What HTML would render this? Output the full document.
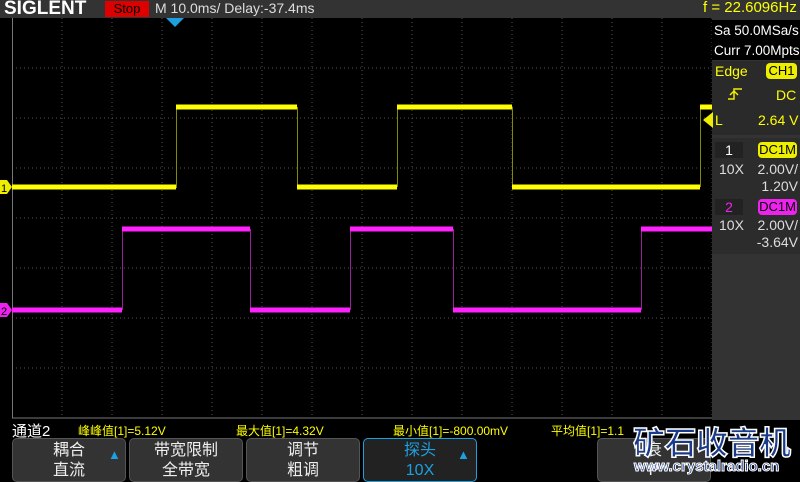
<!DOCTYPE html><html><head><meta charset="utf-8"><style>
body{margin:0;width:800px;height:480px;background:#000;overflow:hidden;position:relative;font-family:"Liberation Sans","Noto Sans CJK SC",sans-serif}
.a{position:absolute;white-space:nowrap}
.btn{position:absolute;top:438px;height:44px;background:#333;border:1px solid #555;border-radius:5px;color:#eee;font-size:16px;text-align:center;line-height:20px;box-sizing:border-box;padding-top:2px}
.y{color:#ff0}
</style></head><body>
<div class="a" style="left:0;top:0;width:800px;height:18px;background:#333"></div>
<div class="a" style="left:4px;top:-2px;color:#fff;font-weight:bold;font-size:19px;letter-spacing:0">SIGLENT</div>
<div class="a" style="left:105px;top:1px;width:44px;height:16px;background:#d00;color:#000;font-size:13px;text-align:center;line-height:16px">Stop</div>
<div class="a" style="left:155px;top:0px;color:#ddd;font-size:14px">M 10.0ms/ Delay:-37.4ms</div>
<div class="a" style="left:703px;top:-1px;color:#ff0;font-size:15px">f = 22.6096Hz</div>
<svg class="a" style="left:0;top:18px" width="712" height="402">
<g stroke="#555" stroke-dasharray="1,3" stroke-width="1">
<path d="M62 0V400M112 0V400M162 0V400M212 0V400M262 0V400M312 0V400M362 0V400M412 0V400M462 0V400M512 0V400M562 0V400M612 0V400M662 0V400M712 0V400"/>
<path d="M12 50H712M12 100H712M12 150H712M12 200H712M12 250H712M12 300H712M12 350H712"/>
</g>
<path d="M12.5 0V400H712" stroke="#777" fill="none"/>
<path d="M166 0L175 9L184 0Z" fill="#1ca0e0"/>
<g stroke-width="1"><path stroke="#880" d="M176.5 89V170M297.5 89V169M397.5 89V169M512.5 89V169M700.5 89V169"/>
<path stroke="#929" d="M122.5 211V292M250.5 211V292M350.5 211V292M453.5 211V292M641.5 211V292"/></g>
<g fill="none" stroke-width="5">
<path stroke="#ff0" d="M12 169H176M297 169H397M512 169H700M176 89H297M397 89H512M700 89H712"/>
<path stroke="#f2f" d="M12 292H122M250 292H350M453 292H641M122 211H250M350 211H453M641 211H712"/>
</g>
<path d="M0 162H7L12 169L7 176H0Z" fill="#ee0"/><text x="1" y="174" font-size="11" fill="#000">1</text>
<path d="M0 285H7L12 292L7 299H0Z" fill="#e2e"/><text x="1" y="297" font-size="11" fill="#000">2</text>
</svg>
<div class="a" style="left:712px;top:18px;width:88px;height:402px;background:#333"></div>
<div class="a" style="left:712px;top:20px;width:88px;height:40px;background:#000"></div>
<div class="a" style="left:714px;top:21px;color:#fff;font-size:13.5px;line-height:20px">Sa 50.0MSa/s<br>Curr 7.00Mpts</div>
<div class="a" style="left:712px;top:61px;width:88px;height:74px;background:#2a2a2a"></div>
<div class="a y" style="left:715px;top:63px;font-size:14px">Edge</div>
<div class="a" style="left:766px;top:63px;width:31px;height:16px;background:#ee0;border-radius:4px;font-size:13px;text-align:center;line-height:16px">CH1</div>
<svg class="a" style="left:726px;top:86px" width="20" height="16"><path d="M2 13H8V3H16M4 9L8 5L12 9" stroke="#ee0" fill="none" stroke-width="1.5"/></svg>
<div class="a y" style="left:776px;top:87px;font-size:14px">DC</div>
<div class="a y" style="left:715px;top:112px;font-size:14px">L</div>
<div class="a y" style="left:758px;top:112px;font-size:14px">2.64 V</div>
<div class="a" style="left:703px;top:112px;width:0;height:0;border-top:8px solid transparent;border-bottom:8px solid transparent;border-right:10px solid #ee0"></div>
<div class="a" style="left:712px;top:138px;width:88px;height:58px;background:#2c2c2c"></div>
<div class="a" style="left:715px;top:142px;width:28px;height:16px;background:#222;color:#fff;font-size:14px;text-align:center">1</div>
<div class="a" style="left:758px;top:142px;width:39px;height:16px;background:#ee0;border-radius:4px;font-size:13px;text-align:center;line-height:16px">DC1M</div>
<div class="a" style="left:719px;top:161px;color:#ddd;font-size:14px">10X</div>
<div class="a" style="left:752px;top:161px;color:#ddd;font-size:14px;line-height:17px;text-align:right;width:46px">2.00V/<br>1.20V</div>
<div class="a" style="left:712px;top:196px;width:88px;height:58px;background:#2c2c2c"></div>
<div class="a" style="left:715px;top:199px;width:28px;height:16px;background:#222;color:#e2e;font-size:14px;text-align:center">2</div>
<div class="a" style="left:758px;top:199px;width:39px;height:16px;background:#e2e;border-radius:4px;font-size:13px;text-align:center;line-height:16px">DC1M</div>
<div class="a" style="left:719px;top:217px;color:#ddd;font-size:14px">10X</div>
<div class="a" style="left:752px;top:217px;color:#ddd;font-size:14px;line-height:17px;text-align:right;width:46px">2.00V/<br>-3.64V</div>
<div class="a" style="left:12px;top:420px;color:#fff;font-size:15px">通道2</div>
<div class="a y" style="left:78px;top:422px;font-size:12px">峰峰值[1]=5.12V</div>
<div class="a y" style="left:236px;top:422px;font-size:12px">最大值[1]=4.32V</div>
<div class="a y" style="left:393px;top:422px;font-size:12px">最小值[1]=-800.00mV</div>
<div class="a y" style="left:551px;top:422px;font-size:12px">平均值[1]=1.1</div>
<div class="btn" style="left:12px;width:114px">耦合<br>直流</div>
<div class="btn" style="left:129px;width:114px">带宽限制<br>全带宽</div>
<div class="btn" style="left:246px;width:114px">调节<br>粗调</div>
<div class="btn" style="left:363px;width:114px;border:1px solid #1ca0e0;color:#1ca0e0;background:#222">探头<br>10X</div>
<div class="btn" style="left:597px;width:114px">衰<br>P</div>
<div class="a" style="left:108px;top:447px;color:#1ca0e0;font-size:13px">▲</div>
<div class="a" style="left:457px;top:447px;color:#1ca0e0;font-size:13px">▲</div>
<div class="a" style="left:633px;top:418px;color:#1a3a8a;font-size:32px;font-weight:bold;letter-spacing:-0.5px;-webkit-text-stroke:1.5px #fff">矿石收音机</div>
<div class="a" style="left:634px;top:458px;color:#1a3a8a;font-size:15px;font-weight:bold;-webkit-text-stroke:1px #fff">www.crystalradio.cn</div>
</body></html>
